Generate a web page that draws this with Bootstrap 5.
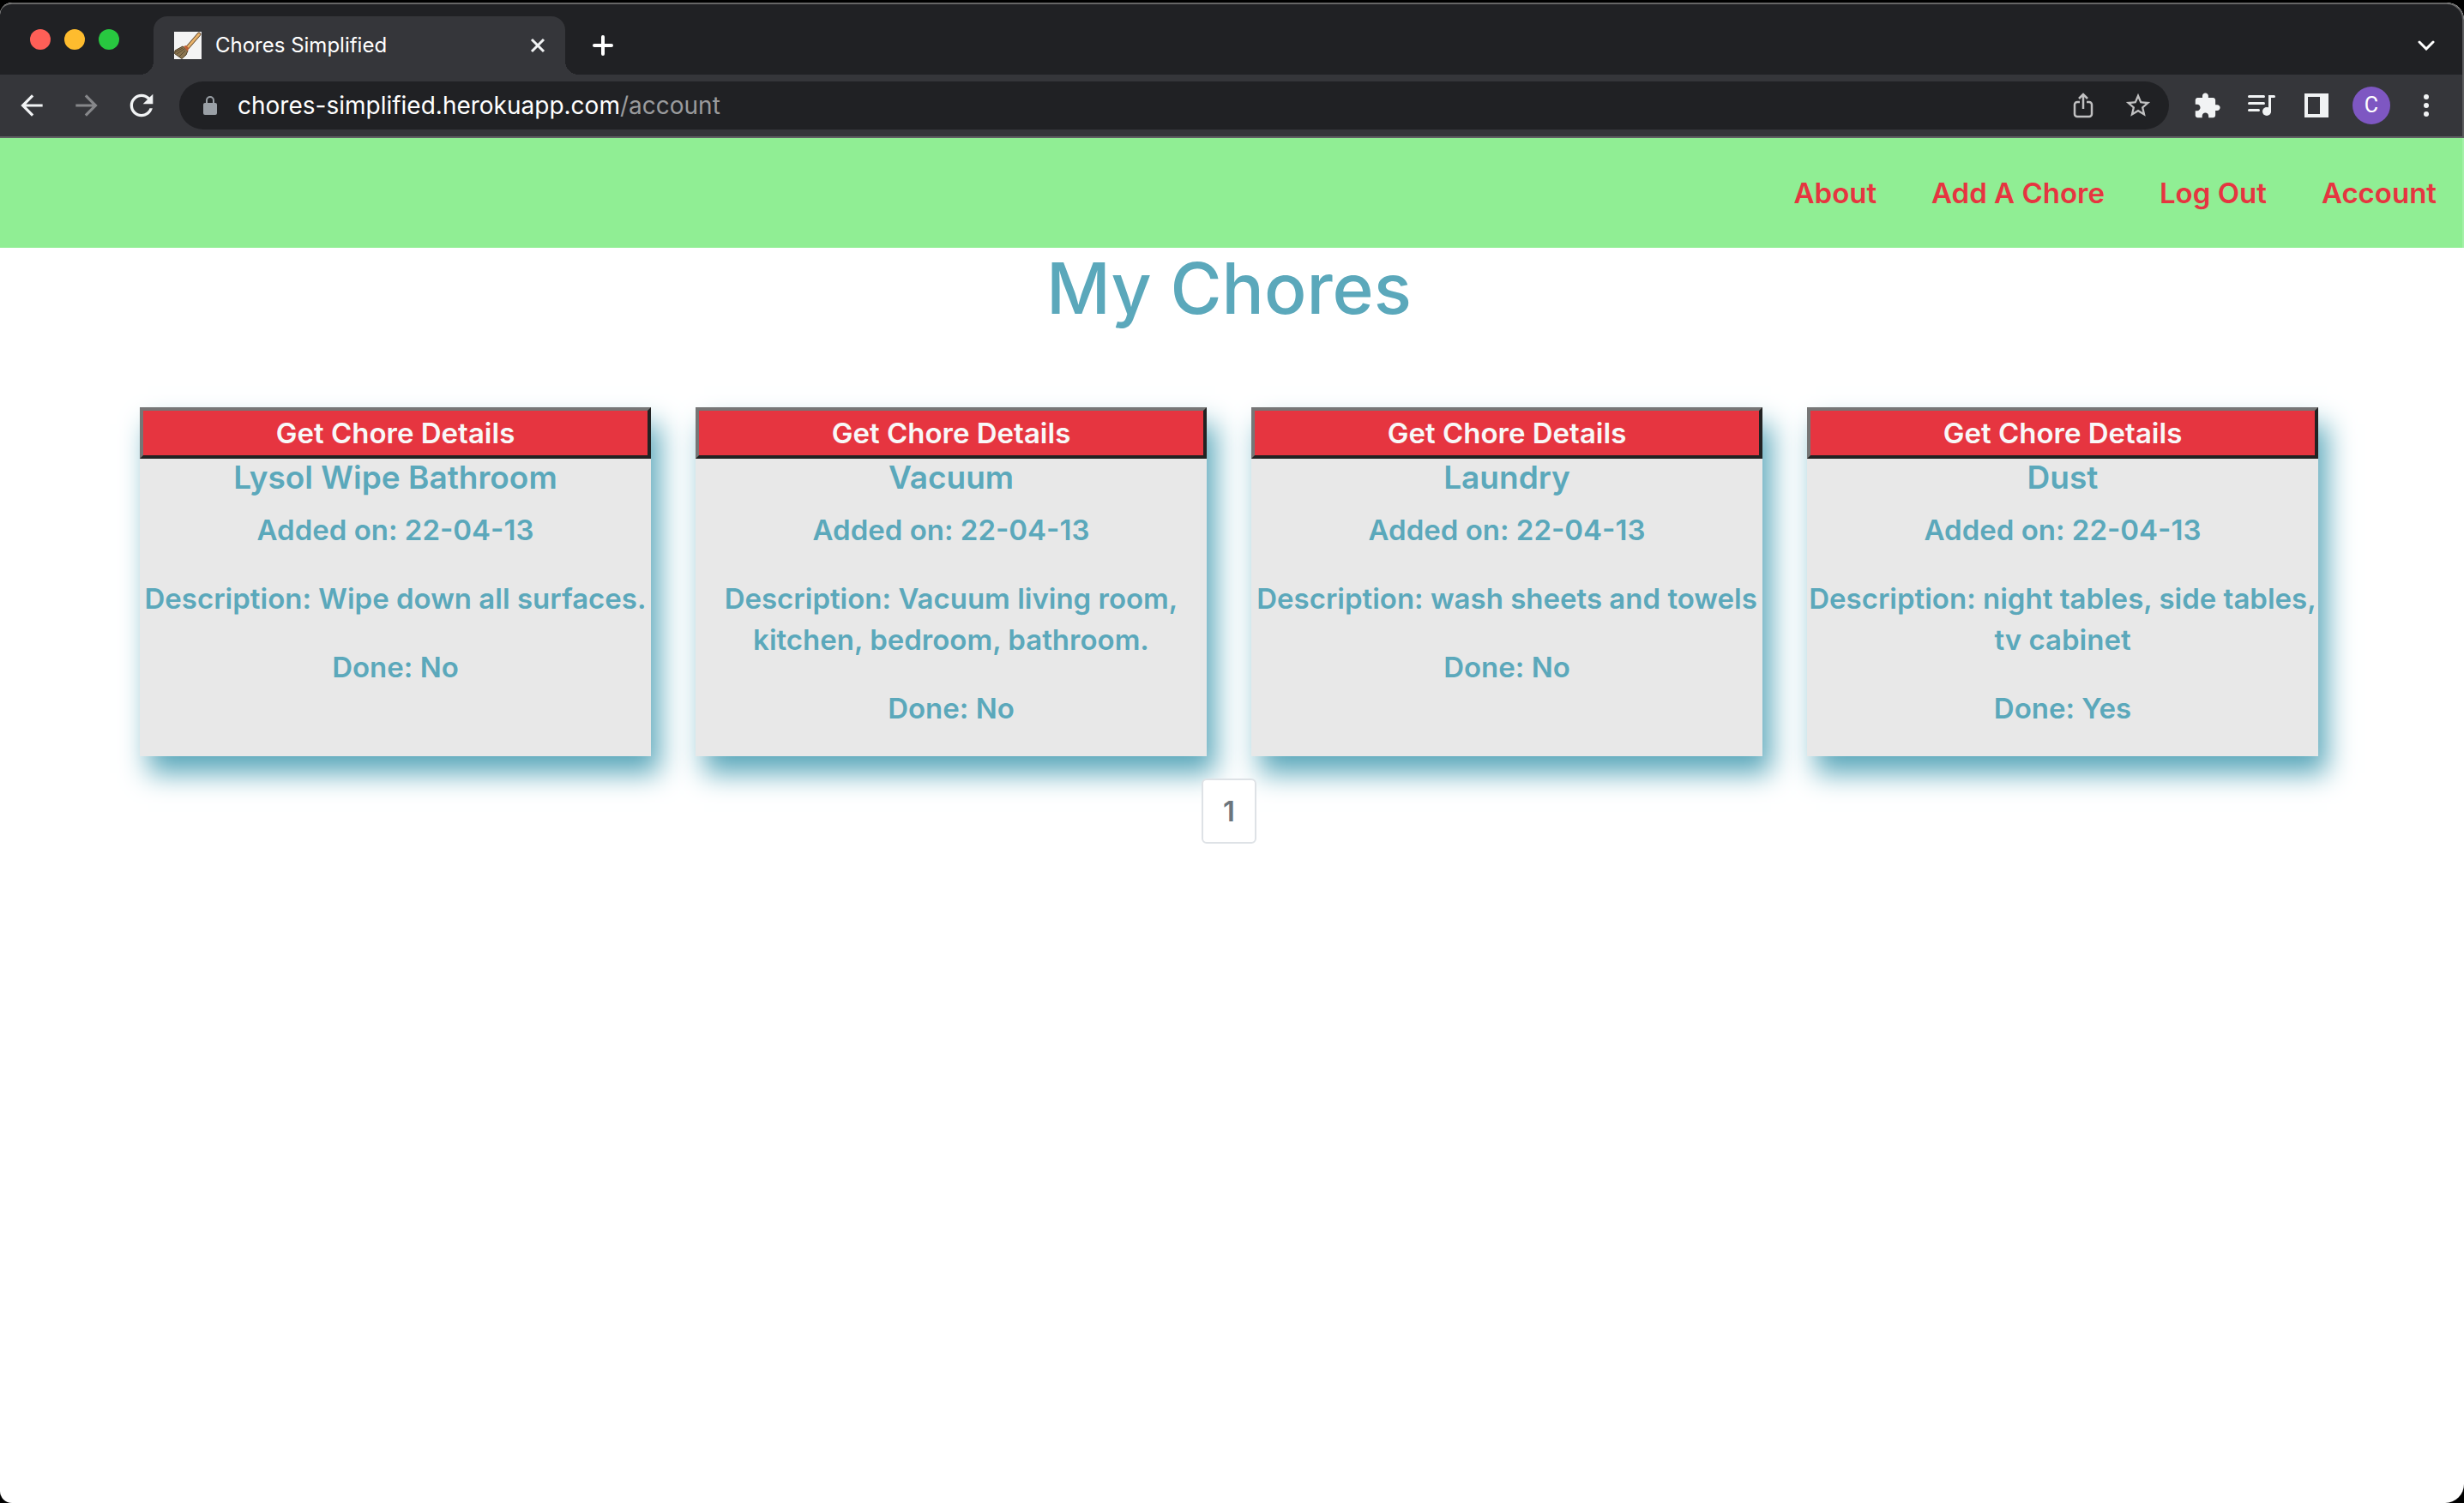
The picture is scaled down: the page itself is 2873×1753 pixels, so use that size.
<!DOCTYPE html>
<html lang="en">
<head>
<meta charset="utf-8">
<meta name="viewport" content="width=device-width, initial-scale=1">
<title>Chores Simplified</title>
<link href="https://cdn.jsdelivr.net/npm/bootstrap@5.3.0/dist/css/bootstrap.min.css" rel="stylesheet">
<style>
  body { background: #000; font-family: Inter, "Open Sans", sans-serif; font-size: 33px; line-height: 48px; }
  .browser-window { min-height: 100vh; padding-top: 3px; }
  .browser-frame { border-radius: 14px 20px 22px 14px; overflow: hidden; background: #fff; }
  .tab-strip { background: #202124; height: 84px; border-top: 2px solid #666; border-right: 2px solid #5c5c5e; border-radius: 14px 20px 0 0; padding-left: 35px; }
  .traffic { gap: 16px; margin-right: 40px; }
  .traffic span { width: 24px; height: 24px; border-radius: 50%; }
  .t-red { background: #ff5f57; } .t-yellow { background: #febc2e; } .t-green { background: #28c840; }
  .browser-tab { background: #35363a; width: 480px; height: 68px; border-radius: 16px 16px 0 0; padding: 0 20px 0 24px; position: relative; color: #fff; font-size: 24px; line-height: 32px; }
  .browser-tab::before, .browser-tab::after { content: ""; position: absolute; bottom: 0; width: 16px; height: 16px; }
  .browser-tab::before { left: -16px; background: radial-gradient(circle at 0 0, transparent 16px, #35363a 16px); }
  .browser-tab::after { right: -16px; background: radial-gradient(circle at 100% 0, transparent 16px, #35363a 16px); }
  .chrome-btn { background: none; border: 0; padding: 0; width: 64px; height: 44px; display: flex; align-items: center; justify-content: center; color: #f1f3f4; flex: none; }
  .chrome-btn.close-tab { width: 24px; }
  .chrome-btn.strip-btn { height: 52px; margin: 0 10px 8px 12px; }
  .toolbar-row { background: #35363a; height: 74px; border-bottom: 2px solid #5f6063; border-right: 2px solid #5c5c5e; padding: 0 10px 0 5px; gap: 12px; }
  .address { background: #202124; height: 56px; border-radius: 28px; padding: 0 4px 0 26px; font-size: 28px; line-height: 40px; color: #fff; }
  .address .chrome-btn { color: #c0c0c1; }
  .address .url-text { padding-left: 22px; }
  .address .url-path { color: #9a9b9d; }
  .avatar { width: 44px; height: 44px; border-radius: 50%; background: #7e57c2; font-size: 25px; line-height: 44px; color: #fff; font-family: Roboto, sans-serif; }
  .site-nav { background: #90ee94; border-right: 2px solid #a5f1a8; padding: 40px 30px 40px 0; gap: 64px; font-weight: 600; }
  .site-nav a { color: #e63540; text-decoration: none; }
  .site-body { color: #5ba8bb; font-weight: 600; padding-right: 7px; }
  .site-body h1 { font-size: 82px; line-height: 96px; font-weight: 500; margin-bottom: 90px; }
  .chore-wrap { max-width: 2640px; padding: 0 50px; }
  .chore-row { --bs-gutter-x: 52px; }
  .chore-card { background: #e8e8e8; box-shadow: 10px 20px 30px #5ba8bb; }
  .chore-card button { display: block; width: 100%; height: 60px; line-height: 48px; padding: 2px; border: 4px solid; border-color: #767676 #222 #222 #767676; background: #e63540; color: #f8f8f8; font-weight: 600; }
  .chore-card h2 { font-size: 37px; line-height: 43px; font-weight: 600; margin-bottom: 16px; }
  .chore-card p { margin-bottom: 32px; }
  .pagination { margin: 26px 0 0; position: relative; }
  .pagination .page-link { width: 64px; padding: 12px 0; border: 2px solid #dee2e6; border-radius: 8px; color: #6c757d; font-size: 33px; line-height: 48px; text-align: center; }
</style>
<script src="https://cdn.jsdelivr.net/npm/bootstrap@5.3.0/dist/js/bootstrap.bundle.min.js"></script>
</head>
<body>
<div class="browser-window d-flex flex-column">
 <div class="browser-frame flex-grow-1">
  <div class="tab-strip d-flex align-items-end">
    <div class="traffic d-flex align-self-center"><span class="t-red"></span><span class="t-yellow"></span><span class="t-green"></span></div>
    <div class="browser-tab d-flex align-items-center">
      <svg class="me-3" width="32" height="32" viewBox="0 0 32 32" fill="none" aria-hidden="true">
        <rect width="32" height="32" fill="#f4f4f4"/>
        <path d="M29 3 16 18" stroke="#5d4226" stroke-width="4.500" stroke-linecap="round"/>
        <path d="M29 3 16 18" stroke="#e9b36c" stroke-width="2.800" stroke-linecap="round"/>
        <path d="M10 17l6 5-2 5-5 4.500-8.500-6 .500-3.500z" fill="#8b7550" stroke="#4d4028"/>
        <path d="M12 20 3 26M13 22 6 29M10 19l-9 5" stroke="#5a4a30"/>
        <path d="M11 17l3-1 3 3-1 4z" fill="#c05f33"/>
      </svg>
      <span class="flex-grow-1">Chores Simplified</span>
      <button class="chrome-btn close-tab" aria-label="Close tab"><svg width="18" height="18" viewBox="0 0 18 18"><path d="M2 2l14 14M16 2 2 16" stroke="currentColor" stroke-width="3"/></svg></button>
    </div>
    <button class="chrome-btn strip-btn" aria-label="New tab"><svg width="24" height="24" viewBox="0 0 24 24"><path d="M12 2v20M2 12h20" stroke="#fff" stroke-width="4" stroke-linecap="round"/></svg></button>
    <button class="chrome-btn strip-btn ms-auto" aria-label="Search tabs"><svg width="20" height="12" viewBox="0 0 20 12"><path d="M2 2l8 8 8-8" stroke="#fff" stroke-width="3" stroke-linecap="round" fill="none"/></svg></button>
  </div>
  <div class="toolbar-row d-flex align-items-center">
    <div class="d-flex">
      <button class="chrome-btn" aria-label="Back"><svg width="38" height="38" viewBox="0 0 24 24" fill="currentColor"><path d="M20 11H7.830l5.590-5.590L12 4l-8 8 8 8 1.410-1.410L7.830 13H20z"/></svg></button>
      <button class="chrome-btn" aria-label="Forward"><svg width="38" height="38" viewBox="0 0 24 24" fill="#86878a"><path d="M4 13h12.170l-5.590 5.590L12 20l8-8-8-8-1.410 1.410L16.170 11H4z"/></svg></button>
      <button class="chrome-btn" aria-label="Reload"><svg width="40" height="40" viewBox="0 0 24 24" fill="currentColor"><path d="M17.65 6.35C16.2 4.9 14.21 4 12 4c-4.42 0-7.99 3.58-7.99 8s3.57 8 7.99 8c3.73 0 6.84-2.55 7.73-6h-2.08c-.82 2.33-3.04 4-5.65 4-3.31 0-6-2.69-6-6s2.69-6 6-6c1.66 0 3.14.69 4.22 1.78L13 11h7V4z"/></svg></button>
    </div>
    <div class="address d-flex align-items-center flex-grow-1">
      <svg width="20" height="24" viewBox="0 0 20 24" aria-hidden="true"><rect x="2" y="9" width="16" height="14" rx="2" fill="#9aa0a6"/><path d="M6 10V6a4 4 0 0 1 8 0v4" fill="none" stroke="#9aa0a6" stroke-width="2"/></svg>
      <span class="flex-grow-1 url-text">chores-simplified.herokuapp.com<span class="url-path">/account</span></span>
      <button class="chrome-btn" aria-label="Share"><svg width="24" height="30" viewBox="0 0 24 30" fill="none" stroke="currentColor" stroke-width="2.500"><path d="M8 11H5a3 3 0 0 0-3 3v11a3 3 0 0 0 3 3h14a3 3 0 0 0 3-3V14a3 3 0 0 0-3-3h-3M12 19V3M7 7l5-5 5 5"/></svg></button>
      <button class="chrome-btn" aria-label="Bookmark"><svg width="34" height="34" viewBox="0 0 24 24" fill="currentColor"><path d="M22 9.240l-7.190-.620L12 2 9.190 8.630 2 9.240l5.460 4.730L5.820 21 12 17.270 18.180 21l-1.630-7.030zM12 15.400l-3.760 2.270 1-4.280-3.320-2.880 4.380-.380L12 6.100l1.710 4.040 4.380.380-3.320 2.880 1 4.280z"/></svg></button>
    </div>
    <div class="d-flex">
      <button class="chrome-btn" aria-label="Extensions"><svg width="33" height="33" viewBox="0 0 24 24" fill="currentColor"><path d="M20.500 11H19V7c0-1.100-.900-2-2-2h-4V3.500C13 2.120 11.880 1 10.500 1S8 2.120 8 3.500V5H4c-1.100 0-1.990.900-1.990 2v3.800H3.500c1.490 0 2.700 1.210 2.700 2.700s-1.210 2.700-2.700 2.700H2V20c0 1.100.900 2 2 2h3.800v-1.500c0-1.490 1.210-2.700 2.700-2.700s2.700 1.210 2.700 2.700V22H17c1.100 0 2-.900 2-2v-4h1.500c1.380 0 2.500-1.120 2.500-2.500S21.880 11 20.500 11z"/></svg></button>
      <button class="chrome-btn" aria-label="Media"><svg width="32" height="28" viewBox="0 0 32 28" fill="none" stroke="currentColor" stroke-width="3" stroke-linecap="round"><path d="M1.500 3.500h17M1.500 11.500h17M1.500 19.500h11M30.500 3.500h-5V21"/><circle cx="22" cy="21" r="5" fill="currentColor" stroke="none"/></svg></button>
      <button class="chrome-btn" aria-label="Side panel"><svg width="28" height="28" viewBox="0 0 28 28"><path d="M0 0h28v28H0zM4 4v20h14V4z" fill="currentColor" fill-rule="evenodd"/></svg></button>
      <button class="chrome-btn" aria-label="Profile"><span class="avatar">C</span></button>
      <button class="chrome-btn" aria-label="Menu"><svg width="8" height="28" viewBox="0 0 8 28" fill="currentColor"><circle cx="4" cy="4" r="3"/><circle cx="4" cy="14" r="3"/><circle cx="4" cy="24" r="3"/></svg></button>
    </div>
  </div>
  <nav class="site-nav d-flex justify-content-end"><a href="#">About</a><a href="#">Add A Chore</a><a href="#">Log Out</a><a href="#">Account</a></nav>
  <main class="site-body text-center">
    <h1>My Chores</h1>
    <div class="chore-wrap mx-auto">
      <div class="row chore-row row-cols-4">
        <div class="col"><article class="chore-card h-100"><button type="button">Get Chore Details</button><h2>Lysol Wipe Bathroom</h2><p>Added on: 22-04-13</p><p>Description: Wipe down all surfaces.</p><p>Done: No</p></article></div>
        <div class="col"><article class="chore-card h-100"><button type="button">Get Chore Details</button><h2>Vacuum</h2><p>Added on: 22-04-13</p><p>Description: Vacuum living room, kitchen, bedroom, bathroom.</p><p>Done: No</p></article></div>
        <div class="col"><article class="chore-card h-100"><button type="button">Get Chore Details</button><h2>Laundry</h2><p>Added on: 22-04-13</p><p>Description: wash sheets and towels</p><p>Done: No</p></article></div>
        <div class="col"><article class="chore-card h-100"><button type="button">Get Chore Details</button><h2>Dust</h2><p>Added on: 22-04-13</p><p>Description: night tables, side tables, tv cabinet</p><p>Done: Yes</p></article></div>
      </div>
    </div>
    <ul class="pagination justify-content-center"><li class="page-item"><a class="page-link" href="#">1</a></li></ul>
  </main>
 </div>
</div>
</body>
</html>
